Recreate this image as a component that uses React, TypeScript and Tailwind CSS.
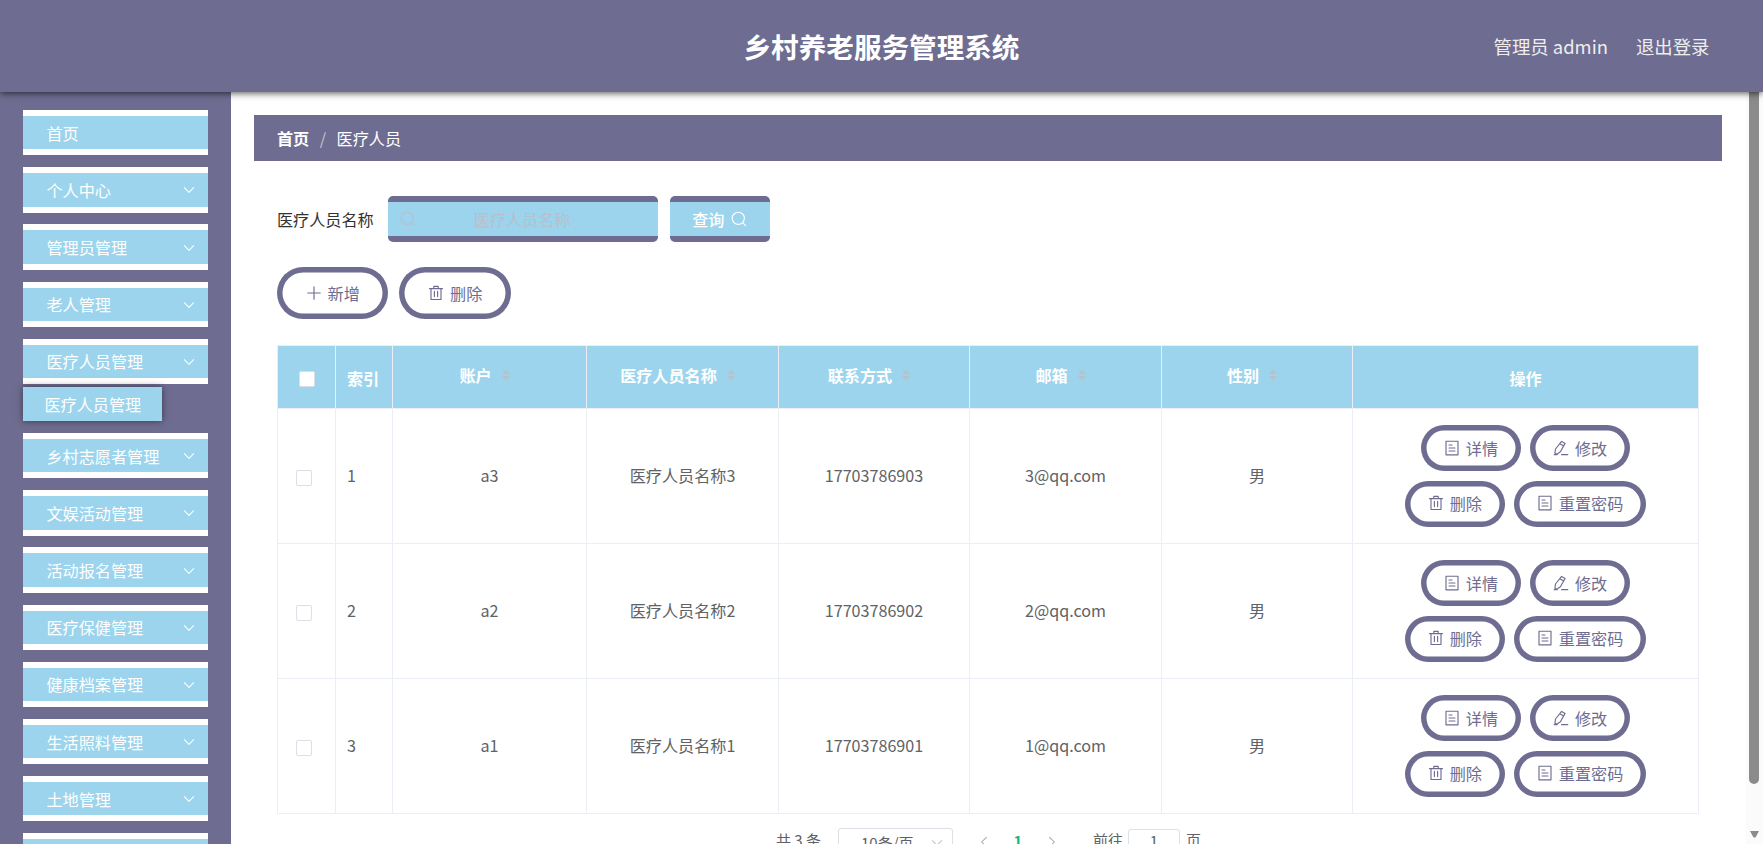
import React from "react";
import clsx from "clsx";

const menus = [
  { title: "首页", leaf: true },
  { title: "个人中心" },
  { title: "管理员管理" },
  { title: "老人管理" },
  { title: "医疗人员管理", children: ["医疗人员管理"] },
  { title: "乡村志愿者管理" },
  { title: "文娱活动管理" },
  { title: "活动报名管理" },
  { title: "医疗保健管理" },
  { title: "健康档案管理" },
  { title: "生活照料管理" },
  { title: "土地管理" },
  { title: "", leaf: true },
];

const columns = ["账户", "医疗人员名称", "联系方式", "邮箱", "性别"];

const rows = [
  { id: 1, account: "a3", name: "医疗人员名称3", phone: "17703786903", email: "3@qq.com", gender: "男" },
  { id: 2, account: "a2", name: "医疗人员名称2", phone: "17703786902", email: "2@qq.com", gender: "男" },
  { id: 3, account: "a1", name: "医疗人员名称1", phone: "17703786901", email: "1@qq.com", gender: "男" },
];

const iconPaths = {
  plus: "M8 1.8v12.4M1.8 8h12.4",
  delete: "M1.5 3.6h13M5.8 3.4V1.4h4.4v2M3 3.8v10.7h10V3.8M6.4 6.4v5.2M9.6 6.4v5.2",
  document: "M2 1.2h12v13.6H2zM5 5h3M5 8h6M5 11h6",
  edit: "M8.6 1.4l3.5 2L7.4 11.7l-3.6 2.5-1.9-1 .6-4.2zM7.2 3.9l3.5 2M1.2 14.6h3M8.5 14.6h6.3",
  search: "M7.3 1.2a6.1 6.1 0 1 0 0 12.2a6.1 6.1 0 1 0 0-12.2M11.7 11.7l2.9 2.9",
  down: "M2.7 5.3L8 10.7l5.3-5.4",
  left: "M10.7 2.7L5.3 8l5.4 5.3",
  right: "M5.3 2.7L10.7 8l-5.4 5.3",
};

type IconProps = {
  name: keyof typeof iconPaths;
  className?: string;
};

const Icon = ({ name, className = "size-4" }: IconProps) => (
  <svg
    viewBox="0 0 16 16"
    fill="none"
    stroke="currentColor"
    strokeWidth={1.15}
    strokeLinecap="round"
    strokeLinejoin="round"
    className={clsx("shrink-0", className)}
  >
    <path d={iconPaths[name]} />
  </svg>
);

type PillProps = {
  icon: keyof typeof iconPaths;
  label: string;
  large?: boolean;
};

const PillButton = ({ icon, label, large }: PillProps) => (
  <button
    className={clsx(
      "flex items-center gap-[6px] rounded-full shadow-[inset_0_0_0_5.5px_#6e6d91] text-[#6e6d91] bg-white pb-[1px]",
      large ? "h-[52px] px-[28.6px]" : "h-[46px] px-[22.7px]"
    )}
  >
    <Icon name={icon} />
    <span>{label}</span>
  </button>
);

const Header = () => (
  <header className="relative z-10 h-[92px] shrink-0 bg-[#6e6d91] text-white flex items-center justify-center shadow-[0_1px_7px_rgba(0,0,0,0.7)]">
    <h1 className="text-[27.6px] font-bold pb-[1px]">乡村养老服务管理系统</h1>
    <div className="absolute right-[53.5px] flex gap-7 text-[18.4px] text-[#eeeeee] pb-[1px]">
      <span>管理员 admin</span>
      <span>退出登录</span>
    </div>
  </header>
);

const Sidebar = () => (
  <aside className="w-[231px] shrink-0 bg-[#6e6d91] pt-[18px] px-[23px] overflow-hidden text-white">
    {menus.map((menu) => (
      <div key={menu.title} className="mb-[11.8px]">
        <div className="h-[45.4px] border-y-6 border-white bg-[#9bd4ec] flex items-center justify-between pl-[23.5px] pr-3">
          <span>{menu.title}</span>
          {!menu.leaf && <Icon name="down" className="size-[14px] mt-[1px]" />}
        </div>
        {menu.children?.map((child) => (
          <div
            key={child}
            className="mt-[3px] w-[139px] h-[34px] bg-[#9bd4ec] flex items-center pl-[21.5px] shadow-[0_0_7px_rgba(0,0,0,0.5)]"
          >
            {child}
          </div>
        ))}
      </div>
    ))}
  </aside>
);

const SearchForm = () => (
  <div className="flex items-center h-[46px] mt-[35px]">
    <label className="text-[#333333] pb-[1px]">医疗人员名称</label>
    <div className="ml-[14px] w-[270px] h-full rounded-[5px] border-y-6 border-[#6e6d91] bg-[#9bd4ec] flex items-center pl-3 pb-[1px] text-[#b9bfcb]">
      <Icon name="search" />
      <span className="ml-[58px]">医疗人员名称</span>
    </div>
    <button className="ml-3 w-[100px] h-full rounded-[5px] border-y-6 border-[#6e6d91] bg-[#9bd4ec] text-white flex items-center justify-center gap-[7px]">
      <span className="font-medium">查询</span>
      <Icon name="search" />
    </button>
  </div>
);

const SortCaret = () => (
  <span className="w-7 flex justify-center">
    <svg viewBox="0 0 8 12" className="w-2 h-3" fill="#bdbfc8">
      <path d="M0 5L4 .5L8 5zM0 7L4 11.5L8 7z" />
    </svg>
  </span>
);

const Checkbox = () => (
  <span className="block size-4 rounded-[2px] border border-[#dcdfe6] bg-white" />
);

const Table = () => (
  <table className="mt-[26px] w-[1422px] table-fixed border-collapse text-[#606266]">
    <colgroup>
      <col className="w-[58px]" />
      <col className="w-[57px]" />
      <col className="w-[194px]" />
      <col className="w-[192px]" />
      <col className="w-[191px]" />
      <col className="w-[192px]" />
      <col className="w-[191px]" />
      <col className="w-[346px]" />
    </colgroup>
    <thead>
      <tr className="h-[63px] bg-[#9bd4ec] text-white">
        <th className="border border-[#ebeef5]">
          <div className="flex justify-center pt-[3px]">
            <Checkbox />
          </div>
        </th>
        <th className="border border-[#ebeef5] font-bold text-left pl-[11px] pt-[1px]">索引</th>
        {columns.map((col) => (
          <th key={col} className="border border-[#ebeef5] font-bold pb-[4px]">
            <div className="flex items-center justify-center">
              {col}
              <SortCaret />
            </div>
          </th>
        ))}
        <th className="border border-[#ebeef5] font-bold pt-[1px]">操作</th>
      </tr>
    </thead>
    <tbody>
      {rows.map((row) => (
        <tr key={row.id} className="h-[135px] text-center">
          <td className="border border-[#ebeef5]">
            <div className="pl-[18px] pt-[3px]">
              <Checkbox />
            </div>
          </td>
          <td className="border border-[#ebeef5] text-left pl-[11px] pb-[2px]">{row.id}</td>
          <td className="border border-[#ebeef5] pb-[2px]">{row.account}</td>
          <td className="border border-[#ebeef5] pb-[2px]">{row.name}</td>
          <td className="border border-[#ebeef5] pb-[2px]">{row.phone}</td>
          <td className="border border-[#ebeef5] pb-[2px]">{row.email}</td>
          <td className="border border-[#ebeef5] pb-[2px]">{row.gender}</td>
          <td className="border border-[#ebeef5]">
            <div className="flex flex-col items-center gap-[9.5px]">
              <div className="flex gap-[9.5px]">
                <PillButton icon="document" label="详情" />
                <PillButton icon="edit" label="修改" />
              </div>
              <div className="flex gap-[9.5px]">
                <PillButton icon="delete" label="删除" />
                <PillButton icon="document" label="重置密码" />
              </div>
            </div>
          </td>
        </tr>
      ))}
    </tbody>
  </table>
);

const Pagination = () => (
  <div className="mt-[14px] pl-[499px] flex items-start text-[15px] leading-[26px] text-[#606266]">
    <span className="w-[62px] -mt-[1px]">共 3 条</span>
    <div className="w-[115px] h-8 rounded-[3px] border border-[#dcdfe6] flex items-center pl-[22px] pr-2 pb-[2px] justify-between">
      <span>10条/页</span>
      <Icon name="down" className="size-[14px] text-[#c0c4cc]" />
    </div>
    <Icon name="left" className="size-[14px] mt-[7px] ml-[24px] text-[#a0a4ac]" />
    <span className="w-[48px] text-center font-bold text-[#18b384] mx-[3px]">1</span>
    <Icon name="right" className="size-[14px] mt-[7px] text-[#a0a4ac]" />
    <span className="ml-[34px] -mt-[1px]">前往</span>
    <div className="mt-[1px] ml-[5px] w-[52px] h-[30px] rounded-[3px] border border-[#dcdfe6] text-center leading-[22px]">
      1
    </div>
    <span className="ml-[6px] -mt-[1px]">页</span>
  </div>
);

// vertical scrollbar of the content area
const Scrollbar = () => (
  <div className="w-[17px] shrink-0 bg-[#fbfbfb] flex flex-col items-center justify-between pb-[6px]">
    <div className="w-[10px] h-[692px] rounded-b-full bg-[#8b8b8b] mr-[1px]" />
    <svg viewBox="0 0 9 7" className="w-[9px] h-[7px] mr-[1px]" fill="#8b8b8b">
      <path d="M0 0h9L5.5 6.5h-2z" />
    </svg>
  </div>
);

const App = () => {
  return (
    <div className="w-full h-[844px] flex flex-col overflow-hidden bg-white font-['Noto_Sans_CJK_SC',sans-serif] text-[16.14px] leading-6">
      <Header />
      <div className="flex flex-1 min-h-0">
        <Sidebar />
        <main className="flex-1 min-w-0 overflow-hidden pt-[23px] pl-[23px] pr-6">
          <nav className="h-[46px] bg-[#6e6d91] text-white flex items-center pl-[23px] pb-[1px]">
            <span className="font-bold">首页</span>
            <span className="mx-[10.5px] text-[#c0c4cc]">/</span>
            <span>医疗人员</span>
          </nav>
          <div className="pl-[23px]">
            <SearchForm />
            <div className="mt-[25px] flex gap-[11px]">
              <PillButton icon="plus" label="新增" large />
              <PillButton icon="delete" label="删除" large />
            </div>
            <Table />
            <Pagination />
          </div>
        </main>
        <Scrollbar />
      </div>
    </div>
  );
};

export default App;
